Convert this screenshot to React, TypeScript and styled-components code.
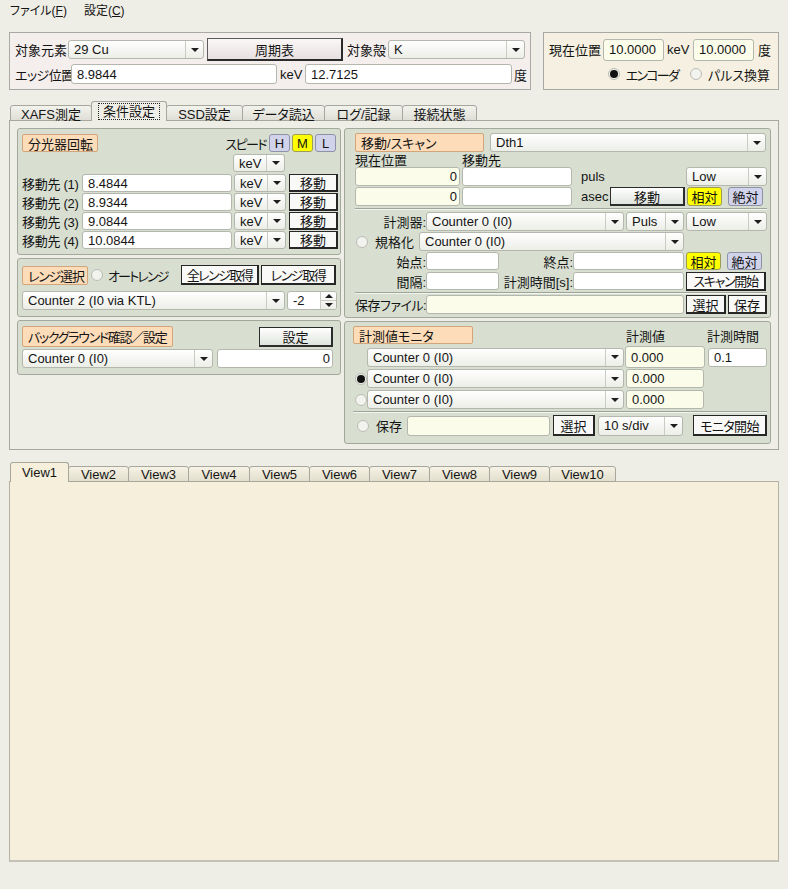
import React from 'react';
import styled, { createGlobalStyle, css } from 'styled-components';

const GlobalStyle = createGlobalStyle`
  html, body {
    margin: 0;
    padding: 0;
    background: #efeee6;
  }
  body {
    font-family: 'Liberation Sans', 'Noto Sans CJK JP', sans-serif;
    font-size: 13px;
    color: #141414;
    font-feature-settings: 'palt';
  }
  * {
    box-sizing: border-box;
  }
`;

type Box = { $w?: number; $h?: number; $ml?: number };

const boxCss = css<Box>`
  flex: none;
  width: ${(p) => (p.$w ? `${p.$w}px` : 'auto')};
  height: ${(p) => p.$h ?? 19}px;
  margin-left: ${(p) => p.$ml ?? 0}px;
`;

const Screen = styled.div`
  width: 788px;
  height: 889px;
  display: flex;
  flex-direction: column;
  overflow: hidden;
`;

const MenuBar = styled.div`
  height: 22px;
  display: flex;
  align-items: center;
  gap: 17px;
  padding: 0 0 3px 10px;
  font-size: 12px;
`;

const MenuItem = styled.span`
  u {
    text-underline-offset: 1px;
  }
`;

const TopRow = styled.div`
  display: flex;
  gap: 12px;
  margin-top: 10px;
  padding: 0 9px;
`;

const InfoPanel = styled.div<{ $w: number; $tone: 'pink' | 'cream' }>`
  width: ${(p) => p.$w}px;
  height: 58px;
  background: ${(p) => (p.$tone === 'pink' ? '#f4eeed' : '#f5f0e1')};
  border: 1px solid #a9a9a3;
  padding: 5px 5px 0 5px;
  display: flex;
  flex-direction: column;
  gap: 3px;
`;

const Row = styled.div<{ $h?: number; $mt?: number; $end?: boolean }>`
  display: flex;
  align-items: center;
  height: ${(p) => p.$h ?? 19}px;
  margin-top: ${(p) => p.$mt ?? 0}px;
  justify-content: ${(p) => (p.$end ? 'flex-end' : 'flex-start')};
  flex: none;
`;

const Label = styled.span<{
  $w?: number;
  $ml?: number;
  $right?: boolean;
  $auto?: boolean;
  $ls?: number;
}>`
  flex: none;
  white-space: nowrap;
  width: ${(p) => (p.$w ? `${p.$w}px` : 'auto')};
  margin-left: ${(p) => (p.$auto ? 'auto' : `${p.$ml ?? 0}px`)};
  text-align: ${(p) => (p.$right ? 'right' : 'left')};
  letter-spacing: ${(p) => p.$ls ?? 0}px;
`;

const Field = styled.div<Box & { $tone?: 'white' | 'cream'; $right?: boolean }>`
  ${boxCss};
  display: flex;
  align-items: center;
  justify-content: ${(p) => (p.$right ? 'flex-end' : 'flex-start')};
  padding: ${(p) => (p.$right ? '0 2px 0 4px' : '0 5px')};
  background: ${(p) => (p.$tone === 'cream' ? '#fbfcea' : '#ffffff')};
  border: 1px solid #b3b7ad;
  border-radius: 3px;
  white-space: nowrap;
  overflow: hidden;
`;

const ComboBox = styled.div<Box & { $auto?: boolean }>`
  ${boxCss};
  ${(p) => p.$auto && 'margin-left: auto;'}
  display: flex;
  border: 1px solid #b3b7ad;
  border-radius: 3px;
  background: linear-gradient(#ffffff, #eceee7);
  overflow: hidden;
`;

const ComboText = styled.div`
  flex: 1;
  display: flex;
  align-items: center;
  padding: 0 5px;
  white-space: nowrap;
  overflow: hidden;
`;

const ComboArrow = styled.div`
  width: 18px;
  flex: none;
  border-left: 1px solid #c9ccc3;
  display: flex;
  align-items: center;
  justify-content: center;
  &::after {
    content: '';
    border-left: 4px solid transparent;
    border-right: 4px solid transparent;
    border-top: 4px solid #1e1e1e;
  }
`;

function Combo({
  w,
  h,
  ml,
  auto,
  children,
}: {
  w: number;
  h?: number;
  ml?: number;
  auto?: boolean;
  children: React.ReactNode;
}) {
  return (
    <ComboBox $w={w} $h={h} $ml={ml} $auto={auto}>
      <ComboText>{children}</ComboText>
      <ComboArrow />
    </ComboBox>
  );
}

type Kind = 'plain' | 'grad' | 'pink' | 'yellow' | 'lavender';

const kinds: Record<Kind, string> = {
  plain: `
    background: #f9f9f7;
    border: 1px solid #262626;
    border-right-width: 2px;
    border-bottom-width: 2px;
  `,
  grad: `
    background: linear-gradient(#ffffff, #dfe4dd);
    border: 1px solid #2c2c2c;
    border-right-width: 2px;
    border-bottom-width: 2px;
  `,
  pink: `
    background: linear-gradient(#fbf7f7, #e7e0e0);
    border: 1px solid #5a5a5a;
    border-right: 2px solid #2a2a2a;
    border-bottom: 2px solid #2a2a2a;
  `,
  yellow: `
    background: #ffff00;
    border: 1px solid #9c9c5a;
    border-radius: 3px;
  `,
  lavender: `
    background: #d1d3ea;
    border: 1px solid #8f91a9;
    border-radius: 3px;
  `,
};

const Btn = styled.div<Box & { $kind?: Kind; $auto?: boolean; $ls?: number }>`
  ${boxCss};
  ${(p) => p.$auto && 'margin-left: auto;'}
  display: flex;
  align-items: center;
  justify-content: center;
  white-space: nowrap;
  letter-spacing: ${(p) => p.$ls ?? 0}px;
  ${(p) => kinds[p.$kind ?? 'plain']}
`;

const Tag = styled.div<Box & { $ls?: number }>`
  ${boxCss};
  display: flex;
  align-items: center;
  padding: 0 5px;
  background: #fddcb9;
  border: 1px solid #d2a57b;
  border-radius: 2px;
  white-space: nowrap;
  overflow: hidden;
  letter-spacing: ${(p) => p.$ls ?? 0}px;
`;

const Radio = styled.span<{ $on?: boolean; $ml?: number }>`
  flex: none;
  width: 12px;
  height: 12px;
  margin-left: ${(p) => p.$ml ?? 0}px;
  border-radius: 50%;
  border: 1px solid #bbbdb4;
  background: #f2f2ee;
  display: flex;
  align-items: center;
  justify-content: center;
  &::after {
    content: '';
    width: 8px;
    height: 8px;
    border-radius: 50%;
    background: ${(p) => (p.$on ? '#111' : 'transparent')};
  }
`;

const SpinBox = styled.div<Box>`
  ${boxCss};
  display: flex;
  border: 1px solid #b3b7ad;
  border-radius: 3px;
  background: #fff;
  overflow: hidden;
`;

const SpinArrows = styled.div`
  width: 16px;
  flex: none;
  display: flex;
  flex-direction: column;
  border-left: 1px solid #c9ccc3;
  background: linear-gradient(#ffffff, #eceee7);
`;

const SpinHalf = styled.div<{ $up?: boolean }>`
  flex: 1;
  display: flex;
  align-items: center;
  justify-content: center;
  &::after {
    content: '';
    border-left: 4px solid transparent;
    border-right: 4px solid transparent;
    ${(p) => (p.$up ? 'border-bottom: 4px solid #1e1e1e;' : 'border-top: 4px solid #1e1e1e;')}
  }
  & + & {
    border-top: 1px solid #c9ccc3;
  }
`;

const TabStrip = styled.div<{ $mt: number; $pl: number }>`
  display: flex;
  align-items: flex-end;
  height: 20px;
  margin-top: ${(p) => p.$mt}px;
  padding-left: ${(p) => p.$pl}px;
  margin-bottom: -1px;
  position: relative;
  z-index: 1;
`;

const TabItem = styled.div<{ $w: number; $on?: boolean; $tone: 'gray' | 'cream' }>`
  width: ${(p) => p.$w}px;
  height: ${(p) => (p.$on ? 20 : 16)}px;
  display: flex;
  align-items: center;
  justify-content: center;
  white-space: nowrap;
  border: 1px solid #a8a79d;
  border-bottom: ${(p) => (p.$on ? 'none' : '1px solid #a8a79d')};
  border-radius: 3px 3px 0 0;
  margin-left: -1px;
  padding-bottom: ${(p) => (p.$on ? 1 : 0)}px;
  background: ${(p) =>
    p.$tone === 'gray'
      ? p.$on
        ? '#efeee6'
        : 'linear-gradient(#f3f3ee, #dfded6)'
      : p.$on
        ? '#f5efdc'
        : 'linear-gradient(#f6f2e5, #e3dfcd)'};
  &:first-child {
    margin-left: 0;
  }
`;

const Focus = styled.span`
  border: 1px dotted #222;
  padding: 0 4px;
  line-height: 15px;
`;

const TabPanel = styled.div`
  margin: 0 9px;
  width: 770px;
  height: 330px;
  border: 1px solid #a8a79d;
  background: #efeee6;
  padding: 7px 6px 0 7px;
  display: flex;
  gap: 3px;
`;

const Column = styled.div<{ $w: number }>`
  width: ${(p) => p.$w}px;
  display: flex;
  flex-direction: column;
  gap: 3px;
`;

const Group = styled.div<{ $h: number; $pad: string }>`
  height: ${(p) => p.$h}px;
  flex: none;
  background: #d8dfd1;
  border: 1px solid #a3a89c;
  border-radius: 3px;
  padding: ${(p) => p.$pad};
  display: flex;
  flex-direction: column;
`;

const Sep = styled.div<{ $mt?: number }>`
  height: 2px;
  flex: none;
  margin-top: ${(p) => p.$mt ?? 2}px;
  border-top: 1px solid #9fa498;
  border-bottom: 1px solid #f2f5ef;
`;

const ViewPanel = styled.div`
  margin: 0 9px;
  width: 770px;
  height: 381px;
  background: #f5efdc;
  border: 1px solid #b3b1a3;
  border-bottom: 2px solid #c4c2b6;
`;

const viewTabs = [
  { name: 'View1', w: 59 },
  { name: 'View2', w: 61 },
  { name: 'View3', w: 61 },
  { name: 'View4', w: 62 },
  { name: 'View5', w: 61 },
  { name: 'View6', w: 61 },
  { name: 'View7', w: 61 },
  { name: 'View8', w: 61 },
  { name: 'View9', w: 61 },
  { name: 'View10', w: 67 },
];

const mainTabs = [
  { name: 'XAFS測定', w: 82 },
  { name: '条件設定', w: 76, on: true },
  { name: 'SSD設定', w: 77 },
  { name: 'データ読込', w: 83 },
  { name: 'ログ/記録', w: 79 },
  { name: '接続状態', w: 75 },
];

const targets = ['8.4844', '8.9344', '9.0844', '10.0844'];

export default function App() {
  return (
    <>
      <GlobalStyle />
      <Screen>
        <MenuBar>
          <MenuItem>
            ファイル(<u>F</u>)
          </MenuItem>
          <MenuItem>
            設定(<u>C</u>)
          </MenuItem>
        </MenuBar>

        <TopRow>
          <InfoPanel $w={522} $tone="pink">
            <Row $h={23}>
              <Label $w={53}>対象元素</Label>
              <Combo w={136}>29 Cu</Combo>
              <Btn $kind="pink" $w={136} $h={23} $ml={3}>
                周期表
              </Btn>
              <Label $w={41} $ml={4}>
                対象殻
              </Label>
              <Combo w={137}>K</Combo>
            </Row>
            <Row $h={20}>
              <Label $w={56} $ls={-0.6}>
                エッジ位置
              </Label>
              <Field $w={206} $h={20}>
                8.9844
              </Field>
              <Label $w={25} $ml={3}>
                keV
              </Label>
              <Field $w={207} $h={20}>
                12.7125
              </Field>
              <Label $ml={2}>度</Label>
            </Row>
          </InfoPanel>
          <InfoPanel $w={236} $tone="cream">
            <Row $h={23}>
              <Label $w={54}>現在位置</Label>
              <Field $w={61} $h={22} $tone="cream">
                10.0000
              </Field>
              <Label $w={26} $ml={3}>
                keV
              </Label>
              <Field $w={61} $h={22} $tone="cream">
                10.0000
              </Field>
              <Label $ml={4}>度</Label>
            </Row>
            <Row $h={20} $end>
              <Radio $on />
              <Label $ml={6} $ls={-1.8}>
                エンコーダ
              </Label>
              <Radio $ml={12} />
              <Label $ml={6}>パルス換算</Label>
              <Label $w={3} />
            </Row>
          </InfoPanel>
        </TopRow>

        <TabStrip $mt={11} $pl={10}>
          {mainTabs.map((t) => (
            <TabItem key={t.name} $w={t.w} $on={t.on} $tone="gray">
              {t.on ? <Focus>{t.name}</Focus> : t.name}
            </TabItem>
          ))}
        </TabStrip>
        <TabPanel>
          <Column $w={324}>
            <Group $h={127} $pad="5px 4px 0 4px">
              <Row $h={18}>
                <Tag $w={76} $h={18}>
                  分光器回転
                </Tag>
                <Label $auto $ls={-1.6}>
                  スピード
                </Label>
                <Btn $kind="lavender" $w={21} $h={18} $ml={3}>
                  H
                </Btn>
                <Btn $kind="yellow" $w={21} $h={18} $ml={2}>
                  M
                </Btn>
                <Btn $kind="lavender" $w={21} $h={18} $ml={2}>
                  L
                </Btn>
              </Row>
              <Row $h={18} $mt={2}>
                <Combo w={52} h={18} ml={211}>
                  keV
                </Combo>
              </Row>
              {targets.map((v, i) => (
                <Row key={v} $h={18} $mt={i === 0 ? 2 : 1}>
                  <Label $w={60} $ls={-0.3}>
                    移動先 ({i + 1})
                  </Label>
                  <Field $w={150} $h={18}>
                    {v}
                  </Field>
                  <Combo w={52} h={18} ml={2}>
                    keV
                  </Combo>
                  <Btn $w={49} $h={18} $ml={3}>
                    移動
                  </Btn>
                </Row>
              ))}
            </Group>

            <Group $h={59} $pad="6px 4px 0 4px">
              <Row $h={20}>
                <Tag $w={66} $h={19} $ls={-1.2}>
                  レンジ選択
                </Tag>
                <Radio $ml={3} />
                <Label $ml={5} $ls={-1.8}>
                  オートレンジ
                </Label>
                <Btn $w={78} $h={20} $auto $ls={-1.5}>
                  全レンジ取得
                </Btn>
                <Btn $w={75} $h={20} $ml={2} $ls={-1.4}>
                  レンジ取得
                </Btn>
              </Row>
              <Row $h={19} $mt={6}>
                <Combo w={263}>Counter 2 (I0 via KTL)</Combo>
                <SpinBox $w={50} $ml={2}>
                  <ComboText>-2</ComboText>
                  <SpinArrows>
                    <SpinHalf $up />
                    <SpinHalf />
                  </SpinArrows>
                </SpinBox>
              </Row>
            </Group>

            <Group $h={55} $pad="5px 4px 0 4px">
              <Row $h={21}>
                <Tag $w={151} $h={21} $ls={-1.3}>
                  バックグラウンド確認／設定
                </Tag>
                <Btn $kind="grad" $w={74} $h={20} $auto>
                  設定
                </Btn>
                <Label $w={3} />
              </Row>
              <Row $h={19} $mt={2}>
                <Combo w={191}>Counter 0 (I0)</Combo>
                <Field $w={116} $ml={4} $right>
                  0
                </Field>
              </Row>
            </Group>
          </Column>

          <Column $w={427}>
            <Group $h={190} $pad="4px 3px 0 10px">
              <Row $h={19}>
                <Tag $w={129} $h={19}>
                  移動/スキャン
                </Tag>
                <Combo w={276} ml={6}>
                  Dth1
                </Combo>
              </Row>
              <Row $h={13} $mt={1}>
                <Label $w={107}>現在位置</Label>
                <Label>移動先</Label>
              </Row>
              <Row $h={19} $mt={1}>
                <Field $w={105} $tone="cream" $right>
                  0
                </Field>
                <Field $w={110} $ml={2} />
                <Label $ml={9}>puls</Label>
                <Combo w={81} auto>
                  Low
                </Combo>
              </Row>
              <Row $h={19} $mt={1}>
                <Field $w={105} $tone="cream" $right>
                  0
                </Field>
                <Field $w={110} $ml={2} />
                <Label $w={29} $ml={9}>
                  asec
                </Label>
                <Btn $kind="grad" $w={75} $h={19}>
                  移動
                </Btn>
                <Btn $kind="yellow" $w={35} $h={19} $ml={2}>
                  相対
                </Btn>
                <Btn $kind="lavender" $w={35} $h={19} $ml={6}>
                  絶対
                </Btn>
              </Row>
              <Sep $mt={2} />
              <Row $h={19} $mt={2}>
                <Label $w={71} $right>
                  計測器:
                </Label>
                <Combo w={198}>Counter 0 (I0)</Combo>
                <Combo w={58} ml={2}>
                  Puls
                </Combo>
                <Combo w={81} ml={2}>
                  Low
                </Combo>
              </Row>
              <Row $h={19} $mt={1}>
                <Radio $ml={1} />
                <Label $w={44} $ml={7}>
                  規格化
                </Label>
                <Combo w={265}>Counter 0 (I0)</Combo>
              </Row>
              <Row $h={18} $mt={1}>
                <Label $w={71} $right>
                  始点:
                </Label>
                <Field $w={73} $h={18} />
                <Label $w={74} $right>
                  終点:
                </Label>
                <Field $w={111} $h={18} />
                <Btn $kind="yellow" $w={35} $h={18} $ml={2}>
                  相対
                </Btn>
                <Btn $kind="lavender" $w={35} $h={18} $ml={6}>
                  絶対
                </Btn>
              </Row>
              <Row $h={18} $mt={2}>
                <Label $w={71} $right>
                  間隔:
                </Label>
                <Field $w={73} $h={18} />
                <Label $w={74} $right>
                  計測時間[s]:
                </Label>
                <Field $w={111} $h={18} />
                <Btn $w={80} $h={19} $ml={2} $ls={-1.3}>
                  スキャン開始
                </Btn>
              </Row>
              <Sep $mt={2} />
              <Row $h={19} $mt={1}>
                <Label $w={71} $right $ls={-0.5}>
                  保存ファイル:
                </Label>
                <Field $w={258} $tone="cream" />
                <Btn $w={40} $h={19} $ml={2}>
                  選択
                </Btn>
                <Btn $w={39} $h={19} $ml={2}>
                  保存
                </Btn>
              </Row>
            </Group>

            <Group $h={123} $pad="4px 3px 0 8px">
              <Row $h={18}>
                <Tag $w={120} $h={18}>
                  計測値モニタ
                </Tag>
                <Label $w={81} $ml={153}>
                  計測値
                </Label>
                <Label>計測時間</Label>
              </Row>
              <Row $h={22} $mt={2}>
                <Combo w={257} ml={14}>
                  Counter 0 (I0)
                </Combo>
                <Field $w={80} $h={22} $ml={1} $tone="cream">
                  0.000
                </Field>
                <Field $w={59} $ml={3}>
                  0.1
                </Field>
              </Row>
              <Row $h={19} $mt={1}>
                <Radio $ml={2} $on />
                <Combo w={257} ml={0}>
                  Counter 0 (I0)
                </Combo>
                <Field $w={78} $ml={2} $tone="cream">
                  0.000
                </Field>
              </Row>
              <Row $h={19} $mt={2}>
                <Radio $ml={2} />
                <Combo w={257}>Counter 0 (I0)</Combo>
                <Field $w={78} $ml={2} $tone="cream">
                  0.000
                </Field>
              </Row>
              <Sep $mt={2} />
              <Row $h={21} $mt={2}>
                <Radio $ml={4} />
                <Label $w={31} $ml={7}>
                  保存
                </Label>
                <Field $w={143} $h={20} $tone="cream" />
                <Btn $w={42} $h={21} $ml={3}>
                  選択
                </Btn>
                <Combo w={85} h={20} ml={3}>
                  10 s/div
                </Combo>
                <Btn $w={74} $h={21} $ml={10} $ls={-0.6}>
                  モニタ開始
                </Btn>
              </Row>
            </Group>
          </Column>
        </TabPanel>

        <TabStrip $mt={12} $pl={10}>
          {viewTabs.map((t, i) => (
            <TabItem key={t.name} $w={t.w} $on={i === 0} $tone="cream">
              {t.name}
            </TabItem>
          ))}
        </TabStrip>
        <ViewPanel />
      </Screen>
    </>
  );
}
